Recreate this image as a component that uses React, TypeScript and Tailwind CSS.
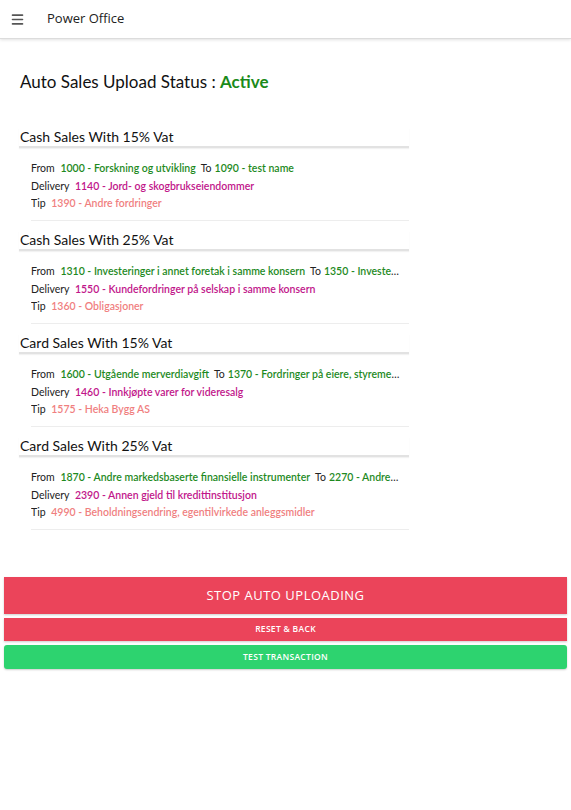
import { Menu } from "lucide-react";

type Section = {
  title: string;
  from: string;
  to: string;
  delivery: string;
  tip: string;
};

const sections: Section[] = [
  {
    title: "Cash Sales With 15% Vat",
    from: "1000 - Forskning og utvikling",
    to: "1090 - test name",
    delivery: "1140 - Jord- og skogbrukseiendommer",
    tip: "1390 - Andre fordringer",
  },
  {
    title: "Cash Sales With 25% Vat",
    from: "1310 - Investeringer i annet foretak i samme konsern",
    to: "1350 - Investeringer i aksjer, andeler og verdipapirfondsandeler",
    delivery: "1550 - Kundefordringer på selskap i samme konsern",
    tip: "1360 - Obligasjoner",
  },
  {
    title: "Card Sales With 15% Vat",
    from: "1600 - Utgående merverdiavgift",
    to: "1370 - Fordringer på eiere, styremedlemmer o.l.",
    delivery: "1460 - Innkjøpte varer for videresalg",
    tip: "1575 - Heka Bygg AS",
  },
  {
    title: "Card Sales With 25% Vat",
    from: "1870 - Andre markedsbaserte finansielle instrumenter",
    to: "2270 - Andre avsetninger for forpliktelser",
    delivery: "2390 - Annen gjeld til kredittinstitusjon",
    tip: "4990 - Beholdningsendring, egentilvirkede anleggsmidler",
  },
];

function SectionBlock({ s }: { s: Section }) {
  return (
    <div className="h-[103px]">
      <h3 className="text-[14px] leading-[18px] text-[#111] pl-[1px] border-b-2 border-[#e2e2e2] shadow-[0_1px_1px_rgba(0,0,0,0.05)]">
        {s.title}
      </h3>
      <div className="ml-[12px] mt-[12px] pr-[9px] pb-[7px] border-b border-[#ededed] text-[10.5px] leading-[17.5px]">
        <div className="whitespace-nowrap overflow-hidden text-ellipsis text-[#222]">
          From <span className="ml-[3px] font-semibold text-[#1e8a1e]">{s.from}</span>
          <span className="ml-[5px]">To</span>
          <span className="ml-[3px] font-semibold text-[#1e8a1e]">{s.to}</span>
        </div>
        <div className="whitespace-nowrap overflow-hidden text-ellipsis text-[#222]">
          Delivery <span className="ml-[3px] font-semibold text-[#c1168a]">{s.delivery}</span>
        </div>
        <div className="whitespace-nowrap overflow-hidden text-ellipsis text-[#222]">
          Tip <span className="ml-[3px] font-semibold text-[#f07f7f]">{s.tip}</span>
        </div>
      </div>
    </div>
  );
}

export default function App() {
  return (
    <div className="min-h-[810px] bg-white font-['Open_Sans',sans-serif]">
      {/* Header */}
      <div className="h-[39px] flex items-center border-b border-[#dcdcdc] shadow-[0_1px_3px_rgba(0,0,0,0.12)]">
        <Menu className="ml-[10px] w-[15px] h-[15px] text-[#555]" strokeWidth={2.6} />
        <span className="ml-[22px] text-[13px] text-[#222] font-['Open_Sans',sans-serif]">Power Office</span>
      </div>

      <div className="font-['Lato',sans-serif]">
        {/* Status */}
        <div className="pl-[20px] pt-[32px] text-[17px] leading-[22px] text-[#111]">
          Auto Sales Upload Status : <span className="font-bold text-[#1a8a1a]">Active</span>
        </div>

        {/* Sections */}
        <div className="ml-[19px] w-[390px] mt-[35px]">
          {sections.map((s) => (
            <SectionBlock key={s.title} s={s} />
          ))}
        </div>
      </div>

      {/* Buttons */}
      <div className="mt-[37px] px-[4px] flex flex-col gap-[4px] font-['Open_Sans',sans-serif]">
        <button className="h-[37px] w-full bg-[#eb445a] text-white text-[13px] tracking-[0.5px] shadow-[0_1px_2px_rgba(0,0,0,0.2)]">
          STOP AUTO UPLOADING
        </button>
        <button className="h-[23px] w-full bg-[#eb445a] text-white text-[8.5px] font-semibold tracking-[0.3px] shadow-[0_1px_2px_rgba(0,0,0,0.2)]">
          RESET &amp; BACK
        </button>
        <button className="h-[24px] w-full rounded-[3px] bg-[#2dd36f] text-white text-[8.5px] font-semibold tracking-[0.3px] shadow-[0_1px_2px_rgba(0,0,0,0.2)]">
          TEST TRANSACTION
        </button>
      </div>
    </div>
  );
}
